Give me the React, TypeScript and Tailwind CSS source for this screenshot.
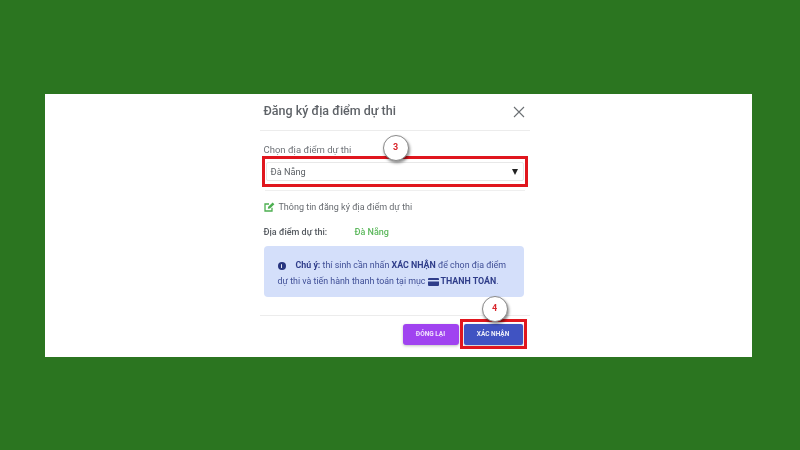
import React from "react";

function Badge({ n, className }: { n: string; className: string }) {
  return (
    <div className={`absolute w-[26px] h-[26px] rounded-full bg-white border border-[#8a8a8a] shadow-[1px_2px_3px_rgba(0,0,0,0.45)] flex items-center justify-center text-[9px] font-bold text-[#d9262c] ${className}`}>
      {n}
    </div>
  );
}

export default function App() {
  return (
    <div className="w-[800px] h-[450px] bg-[#2b7520] pt-[94px] overflow-hidden font-['Roboto',sans-serif]">
      <div className="ml-[45px] w-[707px] h-[262.5px] bg-white flex justify-center blur-[0.45px]">
        <div className="relative w-[270px] ml-[-8px] flex flex-col">
          <div className="h-[37px] shrink-0 border-b border-[#ececec] flex items-center justify-between pl-[4px] pr-[5px] pb-[1px]">
            <span className="text-[12.5px] font-medium text-[#5f6368]">Đăng ký địa điểm dự thi</span>
            <svg width="12" height="12" viewBox="0 0 12 12">
              <path d="M1 1 L11 11 M11 1 L1 11" stroke="#6b6f73" strokeWidth="1.1" fill="none" />
            </svg>
          </div>

          <div className="mt-[12px] pl-[4px] text-[9.5px] leading-[14px] text-[#6f7378]">Chọn địa điểm dự thi</div>

          <div className="mt-[-1px] ml-[2px] w-[266px] h-[31px] border-[3px] border-[#e0161e] px-[1px] py-[3px] shrink-0">
            <div className="h-full border border-[#e8e8e8] rounded-[2px] flex items-center justify-between pl-[4px] pr-[5px] text-[9.2px] text-[#5b5f64]">
              <span>Đà Nẵng</span>
              <svg width="6" height="6" viewBox="0 0 6 6"><path d="M0 0 H6 L3 6 Z" fill="#222" /></svg>
            </div>
          </div>
          <div className="mt-[3px] mx-[5px] h-[1px] bg-[#efefef] shrink-0" />

          <div className="mt-[10px] pl-[4px] flex items-center gap-[4px] text-[9px] leading-[12px] text-[#666a6f]">
            <svg width="11" height="10" viewBox="0 0 11 10">
              <path d="M8 5.8 V9 H1 V2 H5" stroke="#4caf50" strokeWidth="1.3" fill="none" />
              <path d="M3.8 6.8 L4.2 4.8 L8.6 0.6 L10.4 2.2 L6 6.4 Z" fill="#4caf50" />
            </svg>
            <span>Thông tin đăng ký địa điểm dự thi</span>
          </div>

          <div className="mt-[13px] pl-[4px] flex text-[9px] leading-[12px] font-medium">
            <span className="w-[91px] text-[#555a60]">Địa điểm dự thi:</span>
            <span className="text-[#5cb85c]">Đà Nẵng</span>
          </div>

          <div className="mt-[8px] ml-[4px] w-[260px] h-[51px] rounded-[4px] bg-[#d4dffa] px-[14px] pt-[11px] text-[8.85px] leading-[17px] text-[#3f4e96]">
            <div className="flex items-center whitespace-nowrap h-[17px]">
              <span className="w-[8px] h-[8px] rounded-full bg-[#27357f] text-white text-[6px] leading-[8px] text-center font-bold mr-[10px]">i</span>
              <span><b className="text-[#2f3d8a]">Chú ý:</b> thí sinh cần nhấn <b className="text-[#2f3d8a]">XÁC NHẬN</b> để chọn địa điểm</span>
            </div>
            <div className="flex items-center whitespace-nowrap h-[17px] mt-[-1px]">
              <span>dự thi và tiến hành thanh toán tại mục</span>
              <svg width="11" height="8" viewBox="0 0 11 8" className="mx-[2px]">
                <rect width="11" height="8" rx="1" fill="#2f3d8a" />
                <rect y="2" width="11" height="1.5" fill="#d4dffa" />
              </svg>
              <b className="text-[#2f3d8a]">THANH TOÁN</b>
              <span>.</span>
            </div>
          </div>

          <div className="mt-[18px] border-t border-[#ececec] flex-1 flex justify-end items-start pt-[8px] pr-[7px] gap-[5px]">
            <div className="w-[56px] h-[21px] rounded-[3px] bg-[#a043f0] shadow-[0_1px_3px_rgba(0,0,0,0.25)] flex items-center justify-center text-[6.5px] font-bold text-white/85">ĐÓNG LẠI</div>
            <div className="relative w-[59px] h-[21px] rounded-[2px] bg-[#4053c2] shadow-[0_1px_3px_rgba(0,0,0,0.25)] flex items-center justify-center text-[6.5px] font-bold text-white/90">
              XÁC NHẬN
              <div className="absolute left-[-4px] right-[-4px] top-[-5px] bottom-[-4px] border-[3px] border-[#e0161e]" />
            </div>
          </div>

          <Badge n="3" className="left-[123px] top-[41px]" />
          <Badge n="4" className="left-[222px] top-[202px]" />
        </div>
      </div>
    </div>
  );
}
